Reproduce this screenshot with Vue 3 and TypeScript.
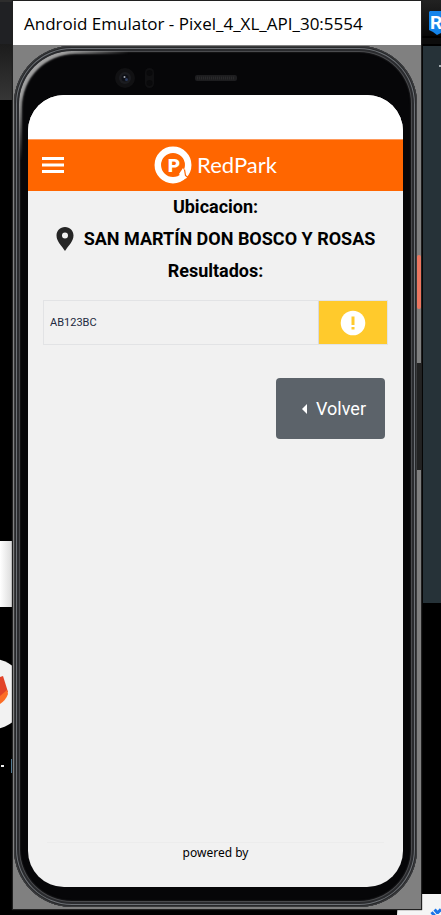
<script setup lang="ts">
import { ref } from 'vue'

interface Result {
  plate: string
  status: string
}

const windowTitle = 'Android Emulator - Pixel_4_XL_API_30:5554'
const location = ref('SAN MARTÍN DON BOSCO Y ROSAS')
const results = ref<Result[]>([{ plate: 'AB123BC', status: 'Advertencia' }])
</script>

<template>
  <div class="desktop">
    <svg class="backdrop backdrop-left" width="13" height="915" viewBox="0 0 13 915" aria-hidden="true">
      <defs>
        <linearGradient id="tab" x1="0" y1="0" x2="0" y2="1">
          <stop offset="0" stop-color="#1c1c1c" />
          <stop offset="1" stop-color="#363636" />
        </linearGradient>
        <linearGradient id="shade" x1="0" y1="0" x2="1" y2="0">
          <stop offset="0" stop-color="#ffffff" />
          <stop offset="1" stop-color="#d8d8d8" />
        </linearGradient>
      </defs>
      <rect width="13" height="44" fill="#202124" />
      <rect width="13" height="2" fill="#2d2d2d" />
      <rect y="44" width="13" height="56" fill="url(#tab)" />
      <rect y="541" width="13" height="66" fill="url(#shade)" />
      <circle cx="-9" cy="694" r="35.500" fill="#f2f2f2" />
      <path d="M0 677L3 676L8 692L0 697Z" fill="#e24329" />
      <path d="M0 696L7 690L8 694Q6 700 0 704Z" fill="#fc6d26" />
      <rect x="1" y="765" width="3" height="2" fill="#eeeeee" />
      <rect x="11" y="759" width="2" height="14" fill="#5b8ba8" />
    </svg>
    <svg class="backdrop backdrop-right" width="50" height="915" viewBox="0 0 50 915" aria-hidden="true">
      <defs>
        <linearGradient id="bar" x1="0" y1="0" x2="0" y2="1">
          <stop offset="0" stop-color="#222222" />
          <stop offset="1" stop-color="#080808" />
        </linearGradient>
      </defs>
      <rect width="50" height="36" fill="url(#bar)" />
      <rect y="38" width="50" height="6" fill="#0c0c0c" />
      <path d="M39 11H50V33L46 35L42 32L38 30V12Z" fill="#1484ea" />
      <text x="39" y="29" class="shield-letter">R</text>
      <rect x="32" y="46" width="18" height="557" fill="#263238" />
      <rect x="48" y="65" width="2" height="2" fill="#a5adb1" />
      <path d="M6 915Q6 894 24 894H50V915Z" fill="#f5f5f5" />
      <path d="M41 915L47 910L50 913" fill="none" stroke="#1a73e8" stroke-width="5" stroke-dasharray="3 1" />
    </svg>

    <section class="window">
      <header class="titlebar">{{ windowTitle }}</header>
      <div class="stage">
        <div class="phone">
          <span class="side-key power"></span>
          <span class="side-key volume"></span>
          <svg class="sensors" width="130" height="24" viewBox="0 0 130 24" aria-hidden="true">
            <circle cx="12" cy="12" r="10" fill="#111113" />
            <circle cx="12" cy="12" r="6" fill="#1b1c20" />
            <circle cx="12" cy="12" r="3.500" fill="#0d0f15" />
            <circle cx="13.500" cy="13.500" r="1.500" fill="#2b3a5c" />
            <circle cx="11.500" cy="11" r="1" fill="#a9afba" />
            <rect x="32" y="2" width="9" height="20" rx="4.500" fill="#101012" />
            <circle cx="36.500" cy="7" r="3" fill="#09090b" />
            <circle cx="36.500" cy="17" r="3" fill="#09090b" />
            <rect x="82" y="9" width="42" height="6" rx="2" fill="#1d1d1f" />
            <path d="M84 12H122" stroke="#29292b" stroke-width="3" stroke-dasharray="1 1" />
          </svg>

          <main class="screen">
            <div class="status-bar"></div>
            <nav class="appbar">
              <button class="menu" type="button" aria-label="Menú">
                <svg width="22" height="16" viewBox="0 0 22 16" aria-hidden="true">
                  <path d="M0 1.500H22M0 8H22M0 14.500H22" stroke="#ffffff" stroke-width="3" />
                </svg>
              </button>
              <div class="brand">
                <svg width="38" height="40" viewBox="0 0 38 40" aria-hidden="true">
                  <circle cx="19" cy="20" r="15.200" fill="none" stroke="#ffffff" stroke-width="6.500" />
                  <path d="M25 29L29 23L32 29L33 33L29 34Z" fill="#ffffff" />
                  <path d="M30.500 24.500L31.500 30.500L35 33.500" fill="none" stroke="#ff6600" stroke-width="1.200" />
                  <text x="20" y="27" class="brand-letter">P</text>
                </svg>
                <span>RedPark</span>
              </div>
            </nav>

            <div class="content">
              <h2>Ubicacion:</h2>
              <h2 class="place">
                <svg width="18" height="24" viewBox="0 0 18 24" aria-hidden="true">
                  <path fill-rule="evenodd" d="M9 0C4 0 0.500 3.700 0.500 8.500C0.500 14.500 6 19 9 24C12 19 17.500 14.500 17.500 8.500C17.500 3.700 14 0 9 0ZM9 5.500A3 3 0 1 1 9 11.500A3 3 0 1 1 9 5.500Z" fill="#262626" />
                </svg>
                {{ location }}
              </h2>
              <h2>Resultados:</h2>

              <table class="results">
                <tbody>
                  <tr v-for="result in results" :key="result.plate">
                    <td>{{ result.plate }}</td>
                    <td class="status">
                      <button type="button" :aria-label="result.status">
                        <svg width="26" height="26" viewBox="0 0 26 26" aria-hidden="true">
                          <circle cx="13" cy="13" r="12.300" fill="#ffffff" />
                          <path d="M11.500 6.500H14.500V15H11.500ZM11.500 17H14.500V19.500H11.500Z" fill="#ffca2c" />
                        </svg>
                      </button>
                    </td>
                  </tr>
                </tbody>
              </table>

              <button class="back" type="button">
                <svg width="5" height="10" viewBox="0 0 5 10" aria-hidden="true">
                  <path d="M5 0V10L0 5Z" fill="#ffffff" />
                </svg>
                Volver
              </button>
            </div>

            <footer class="footer">powered by</footer>
          </main>
        </div>
      </div>
    </section>
  </div>
</template>

<style>
body {
  margin: 0;
  background: #000000;
}
</style>

<style scoped>
* {
  box-sizing: border-box;
}

.desktop {
  position: relative;
  display: flex;
  min-height: 100vh;
  padding: 1px 20px 6px 13px;
  background: #000000;
  overflow: hidden;
}

.backdrop {
  position: absolute;
  top: 0;
}

.backdrop-left {
  left: 0;
}

.backdrop-right {
  right: 0;
}

.shield-letter {
  fill: #ffffff;
  font: 700 19px Roboto, sans-serif;
}

.window {
  position: relative;
  display: flex;
  flex: 1;
  flex-direction: column;
  min-width: 0;
  box-shadow: 0 0 1px 1px #202020;
}

.titlebar {
  height: 44px;
  padding: 0 11px;
  background: #ffffff;
  color: #000000;
  font: 17px/45px "Open Sans", "Noto Sans", sans-serif;
  white-space: nowrap;
  overflow: hidden;
}

.stage {
  display: flex;
  flex: 1;
  padding: 1px 4px 2px 1px;
  background: #808080;
}

.phone {
  position: relative;
  display: flex;
  flex: 1;
  min-width: 0;
  padding: 49px 14px 20px 14px;
  border-radius: 58px;
  background: #060608;
  box-shadow:
    inset 0 0 0 1px #3a3b3d,
    inset 0 0 0 2px #28292b,
    inset 0 0 0 3px #6e7277,
    inset 0 0 0 5px #2a2b2e,
    inset 0 0 0 6px #4a4b4e,
    inset 0 0 1px 7px #141416;
}

/* Light falling on the upper left corner of the metal rim */
.phone::before {
  content: "";
  position: absolute;
  inset: 5px;
  border-radius: 53px;
  box-shadow: inset 3px 3px 2px #a0a0a0;
  mask-image: radial-gradient(circle at 0 0, #000000 45px, transparent 110px);
}

.side-key {
  position: absolute;
  right: -4px;
  width: 4px;
}

.power {
  top: 209px;
  height: 54px;
  border-radius: 2px;
  background: #ec7660;
}

.volume {
  top: 317px;
  height: 107px;
  background: #222222;
}

.sensors {
  position: absolute;
  top: 20px;
  left: 99px;
}

.screen {
  display: flex;
  flex: 1;
  flex-direction: column;
  min-width: 0;
  border-radius: 36px;
  background: #f1f1f1;
  color: #000000;
  font-family: Roboto, sans-serif;
  overflow: hidden;
}

.status-bar {
  height: 44px;
  background: #ffffff;
}

.appbar {
  display: grid;
  grid-template-columns: 1fr auto 1fr;
  align-items: center;
  height: 52px;
  padding: 0 14px 2px;
  border-top: 1px solid #ff9a5c;
  background: #ff6600;
}

.menu {
  display: flex;
  justify-self: start;
  padding: 0;
  border: 0;
  background: none;
}

.brand {
  display: flex;
  align-items: center;
  gap: 5px;
  color: #ffffff;
  font: 22px/24px Lato, sans-serif;
}

.brand-letter {
  fill: #ffffff;
  font: 900 19px Roboto, sans-serif;
  text-anchor: middle;
}

.content {
  display: flex;
  flex: 1;
  flex-direction: column;
  padding: 0 15px;
}

h2 {
  margin: 0;
  font-size: 18px;
  font-weight: 700;
  line-height: 32px;
  text-align: center;
  white-space: nowrap;
}

.place {
  display: flex;
  align-items: center;
  justify-content: center;
  gap: 10px;
}

.results {
  width: 100%;
  margin-top: 13px;
  border: 1px solid #e2e3e5;
  border-collapse: separate;
  border-spacing: 0;
  color: #212940;
  font-size: 11px;
}

td {
  height: 43px;
  padding: 0 6px;
}

.status {
  width: 69px;
  padding: 0;
  border-left: 1px solid #d9d9dc;
}

.status button {
  display: flex;
  align-items: center;
  justify-content: center;
  width: 100%;
  height: 43px;
  padding: 0;
  border: 0;
  background: #ffca2c;
}

.back {
  display: flex;
  align-items: center;
  align-self: flex-end;
  justify-content: flex-end;
  gap: 9px;
  width: 109px;
  height: 61px;
  margin: 33px 3px 0 0;
  padding: 0 19px;
  border: 0;
  border-radius: 4px;
  background: #5c636a;
  color: #ffffff;
  font: 18px/24px Roboto, sans-serif;
}

.footer {
  height: 45px;
  margin: 0 19px;
  border-top: 1px solid #ececec;
  font: 12px/19px "Noto Sans", sans-serif;
  text-align: center;
}
</style>
